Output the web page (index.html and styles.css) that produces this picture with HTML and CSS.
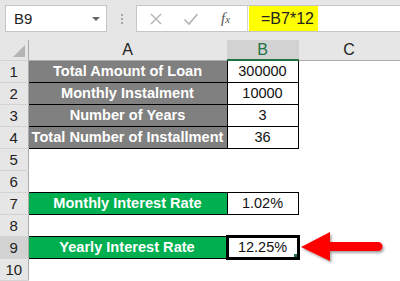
FILE: index.html
```html
<!DOCTYPE html>
<html>
<head>
    <title>Yearly Interest Rate</title>
    <link rel="stylesheet" href="styles.css">
</head>
<body>
    <div id="app">
        <div class="formula-bar">
            <div class="name-box">
                <span>B9</span>
                <span class="caret"></span>
            </div>
            <div class="dots"><i></i><i></i><i></i></div>
            <div class="fx-box">
                <div class="fx-buttons">
                    <svg class="btn-icon" width="14" height="14" viewBox="0 0 14 14"><path d="M2 2 L12 12 M12 2 L2 12" stroke="#b3b3b3" stroke-width="1.4" fill="none"/></svg>
                    <svg class="btn-icon" width="16" height="14" viewBox="0 0 16 14"><path d="M1.5 7.5 L6 12 L14.5 2" stroke="#b3b3b3" stroke-width="1.6" fill="none"/></svg>
                    <span class="fx">f<small>x</small></span>
                </div>
                <div class="fx-input"><span class="hl">=B7*12</span></div>
            </div>
        </div>

        <table class="sheet">
            <colgroup>
                <col class="c-hd">
                <col class="c-a">
                <col class="c-b">
                <col class="c-c">
            </colgroup>
            <tr class="col-hd">
                <th class="corner"><span class="tri"></span></th>
                <th>A</th>
                <th class="active">B</th>
                <th>C</th>
            </tr>
            <tr><th>1</th><td class="lbl gray">Total Amount of Loan</td><td class="val">300000</td><td></td></tr>
            <tr><th>2</th><td class="lbl gray">Monthly Instalment</td><td class="val">10000</td><td></td></tr>
            <tr><th>3</th><td class="lbl gray">Number of Years</td><td class="val">3</td><td></td></tr>
            <tr><th>4</th><td class="lbl gray">Total Number of Installment</td><td class="val">36</td><td></td></tr>
            <tr><th>5</th><td></td><td></td><td></td></tr>
            <tr><th>6</th><td></td><td></td><td></td></tr>
            <tr><th>7</th><td class="lbl green">Monthly Interest Rate</td><td class="val">1.02%</td><td></td></tr>
            <tr><th>8</th><td></td><td></td><td></td></tr>
            <tr><th class="active">9</th><td class="lbl green">Yearly Interest Rate</td><td class="val selected">12.25%<span class="handle"></span></td><td></td></tr>
            <tr><th>10</th><td></td><td></td><td></td></tr>
        </table>

        <svg class="arrow" width="100" height="45" viewBox="0 0 100 45">
            <defs>
                <filter id="shadow" x="-20%" y="-20%" width="150%" height="160%">
                    <feDropShadow dx="1.5" dy="2" stdDeviation="1.2" flood-color="#000" flood-opacity="0.35"/>
                </filter>
            </defs>
            <!-- tip at (301,247) in page coords, svg origin at (295,225) -->
            <path d="M6 22 L35 7 L35 17 L83 17 A4.5 4.5 0 0 1 83 26 L35 26 L35 36 Z" fill="#ff0000" filter="url(#shadow)"/>
        </svg>
    </div>
</body>
</html>
```

FILE: styles.css
```css
* {
    box-sizing: border-box;
    margin: 0;
    padding: 0;
}

body {
    width: 400px;
    height: 281px;
    overflow: hidden;
    background: #fff;
    font-family: "Liberation Sans", Arial, sans-serif;
}

#app {
    position: relative;
    width: 400px;
    height: 281px;
}

/* Formula bar */
.formula-bar {
    display: flex;
    align-items: flex-start;
    height: 40px;
    padding-top: 5px;
    background: #e6e6e6;
}

.name-box {
    display: flex;
    align-items: center;
    justify-content: space-between;
    width: 102px;
    height: 27px;
    margin-left: 5px;
    padding: 0 6px 0 8px;
    background: #fff;
    border: 1px solid #c6c6c6;
    font-size: 15px;
    color: #222;
}

.caret {
    width: 0;
    height: 0;
    border-left: 4px solid transparent;
    border-right: 4px solid transparent;
    border-top: 4px solid #666;
}

.dots {
    display: flex;
    flex-direction: column;
    gap: 2px;
    margin: 9px 13px 0 14px;
}

.dots i {
    display: block;
    width: 2px;
    height: 2px;
    background: #a6a6a6;
}

.fx-box {
    display: flex;
    flex-grow: 1;
    height: 27px;
    background: #fff;
    border: 1px solid #c6c6c6;
    border-right: none;
}

.fx-buttons {
    display: flex;
    align-items: center;
    width: 111px;
    padding-left: 12px;
    border-right: 1px solid #d4d4d4;
}

.btn-icon {
    margin-right: 20px;
}

.fx {
    margin-left: 2px;
    font-family: "Liberation Serif", serif;
    font-style: italic;
    font-size: 15px;
    color: #555;
}

.fx small {
    font-size: 11px;
}

.fx-input {
    display: flex;
    flex-grow: 1;
    padding-left: 1px;
}

.hl {
    display: flex;
    align-items: center;
    width: 69px;
    height: 25px;
    padding-left: 12px;
    background: #ffff00;
    font-size: 16px;
    color: #222;
}

/* Sheet */
.sheet {
    border-collapse: collapse;
    table-layout: fixed;
    width: 400px;
}

.c-hd { width: 28px; }
.c-a { width: 199px; }
.c-b { width: 71px; }
.c-c { width: 102px; }

.sheet tr {
    height: 22px;
}

.sheet tr.col-hd {
    height: 20px;
}

.col-hd th {
    background: #e6e6e6;
    border-right: 1px solid #d0d0d0;
    border-bottom: 1px solid #ababab;
    font-weight: normal;
    font-size: 16px;
    color: #222;
}

.col-hd th.corner {
    position: relative;
    border-right: 1px solid #ababab;
}

.tri {
    position: absolute;
    right: 3px;
    bottom: 3px;
    width: 0;
    height: 0;
    border-left: 12px solid transparent;
    border-bottom: 12px solid #b4b4b4;
}

.col-hd th.active {
    background: #d2d2d2;
    border-bottom: 2px solid #217346;
    color: #217346;
}

.sheet tr th:first-child {
    background: #e6e6e6;
    border-right: 1px solid #ababab;
    border-bottom: 1px solid #d4d4d4;
    font-weight: normal;
    font-size: 15px;
    color: #222;
    text-align: center;
}

.sheet tr th.active:first-child {
    background: #d2d2d2;
}

td {
    padding: 0;
    text-align: center;
    font-size: 14.5px;
    color: #111;
}

td.lbl {
    border: 1px solid #000;
    font-weight: bold;
    font-size: 14.6px;
    color: #fff;
    white-space: nowrap;
}

td.gray {
    background: #808080;
}

td.green {
    background: #00b050;
}

td.val {
    border: 1px solid #000;
}

td.selected {
    position: relative;
    border: 3px solid #000;
}

.handle {
    position: absolute;
    right: 0;
    bottom: 0;
    width: 3px;
    height: 3px;
    background: #217346;
}

.arrow {
    position: absolute;
    left: 295px;
    top: 225px;
}
```
